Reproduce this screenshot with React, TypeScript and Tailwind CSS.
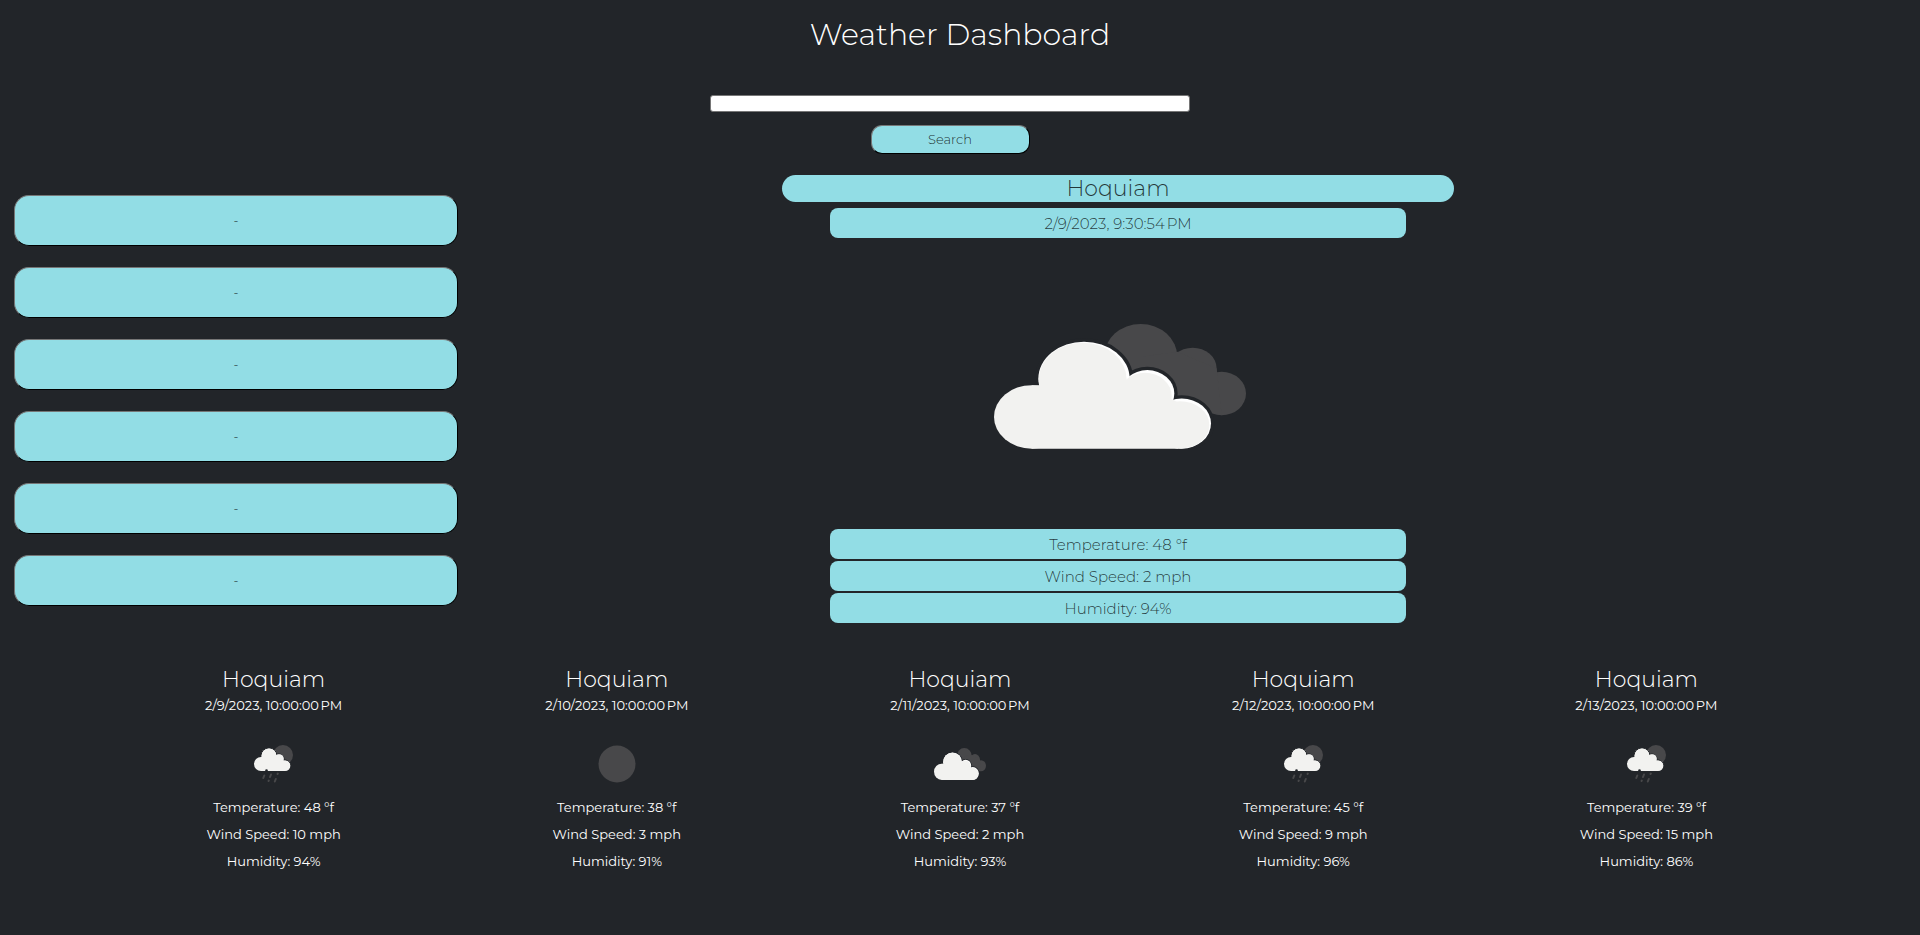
const BUTTON = 'bg-[#92dde5] border border-t-[#767676] border-l-[#767676] border-r-black border-b-black text-[13px] font-light text-black/80';
const BAR = 'h-[30px] rounded-lg bg-[#92dde5] leading-[31px]';

function CloudIcon({ className }: { className: string }) {
  return (
    <svg viewBox="72 72 756 374" preserveAspectRatio="none" className={className} aria-hidden="true">
      <g fill="#48484a">
        <ellipse cx="512" cy="170" rx="110" ry="98" />
        <ellipse cx="668" cy="205" rx="72" ry="62" />
        <ellipse cx="755" cy="280" rx="73" ry="65" />
        <path d="M512 170L622 155L740 205L755 345L600 300Z" />
      </g>
      <g fill="#222529" stroke="#222529" strokeWidth="20">
        <ellipse cx="342" cy="235" rx="137" ry="110" />
        <ellipse cx="532" cy="280" rx="81" ry="70" />
        <ellipse cx="635" cy="370" rx="88" ry="75" />
      </g>
      <g fill="#ffffff">
        <ellipse cx="342" cy="235" rx="137" ry="110" />
        <ellipse cx="532" cy="280" rx="81" ry="70" />
        <ellipse cx="635" cy="370" rx="88" ry="75" />
      </g>
      <g fill="#f2f2f0">
        <ellipse cx="185" cy="350" rx="113" ry="95" />
        <ellipse cx="338" cy="238" rx="132" ry="110" />
        <ellipse cx="525" cy="288" rx="80" ry="70" />
        <ellipse cx="630" cy="374" rx="88" ry="71" />
        <path d="M185 255H540L625 308V445H185Z" />
      </g>
    </svg>
  );
}

function RainIcon() {
  return (
    <svg viewBox="0 0 39 38" className="h-[38px] w-[39px]" aria-hidden="true">
      <circle cx="29" cy="10" r="10" fill="#48484a" />
      <g fill="#f2f2f0" stroke="#222529" strokeWidth="1">
        <circle cx="15" cy="11" r="8" />
        <circle cx="25" cy="14" r="5" />
        <circle cx="31" cy="20.500" r="5.500" />
      </g>
      <g fill="#f2f2f0">
        <circle cx="7" cy="19" r="7" />
        <circle cx="15" cy="11" r="7.500" />
        <circle cx="25" cy="14" r="4.800" />
        <circle cx="31" cy="20.700" r="5.300" />
        <path d="M7 12H22L31 16V26H7Z" />
      </g>
      <circle cx="12.500" cy="25.500" r="1.300" fill="#222529" />
      <g stroke="#48484a" strokeWidth="2" strokeLinecap="round">
        <path d="M10.300 30.500L9.300 33M17 29.500L16 32M14.800 35.500L14.500 36M23.800 28.500L23.500 29M21.800 34L20.800 36.500" />
      </g>
    </svg>
  );
}

function MoonIcon() {
  return (
    <svg viewBox="0 0 38 38" className="h-[38px] w-[38px]" aria-hidden="true">
      <circle cx="19" cy="19" r="18.500" fill="#48484a" />
    </svg>
  );
}

type Sky = 'rain' | 'moon' | 'cloud';

function SkyIcon({ sky }: { sky: Sky }) {
  if (sky === 'rain') return <RainIcon />;
  if (sky === 'moon') return <MoonIcon />;
  return <CloudIcon className="h-8 w-[52px]" />;
}

const forecast: { date: string; sky: Sky; temp: number; wind: number; humidity: number }[] = [
  { date: '2/9/2023', sky: 'rain', temp: 48, wind: 10, humidity: 94 },
  { date: '2/10/2023', sky: 'moon', temp: 38, wind: 3, humidity: 91 },
  { date: '2/11/2023', sky: 'cloud', temp: 37, wind: 2, humidity: 93 },
  { date: '2/12/2023', sky: 'rain', temp: 45, wind: 9, humidity: 96 },
  { date: '2/13/2023', sky: 'rain', temp: 39, wind: 15, humidity: 86 },
];

const history = ['-', '-', '-', '-', '-', '-'];

export default function App() {
  return (
    <div className="min-h-screen bg-[#222529] font-['Montserrat','Inter',sans-serif] text-white">
      <header className="pt-[15px] text-center">
        <h1 className="text-[30px] leading-10 font-light">Weather Dashboard</h1>
      </header>

      <form className="mt-10 mr-5 flex flex-col items-center" onSubmit={(e) => e.preventDefault()}>
        <input
          type="text"
          aria-label="City"
          className="h-[17px] w-[25vw] rounded-[3px] border border-[#767676] bg-white px-1 text-[13px] text-black"
        />
        <button type="submit" className={`${BUTTON} mt-[13px] h-[29px] w-[159px] rounded-[11px]`}>
          Search
        </button>
      </form>

      <div className="mt-[21px] flex">
        <aside className="w-[472px] shrink-0 px-[14px] pt-5">
          <ul className="flex flex-col gap-[21px]">
            {history.map((city, i) => (
              <li key={i}>
                <button type="button" className={`${BUTTON} h-[51px] w-full rounded-[15px]`}>
                  {city}
                </button>
              </li>
            ))}
          </ul>
        </aside>

        <main className="flex flex-1 flex-col items-center pr-[156px] text-center text-[15px] font-light text-black/75">
          <h2 className="h-[27px] w-[35vw] rounded-[14px] bg-[#92dde5] text-[22px] leading-[27px]">Hoquiam</h2>
          <p className={`${BAR} mt-[6px] w-[30vw]`}>2/9/2023, 9:30:54{'\u202f'}PM</p>
          <div className="flex h-[291px] items-center justify-center pt-[6px] pl-1">
            <CloudIcon className="h-[125px] w-[252px]" />
          </div>
          <div className="flex w-[30vw] flex-col gap-[2px]">
            <p className={BAR}>Temperature: 48 °f</p>
            <p className={BAR}>Wind Speed: 2 mph</p>
            <p className={BAR}>Humidity: 94%</p>
          </div>
        </main>
      </div>

      <section className="mt-[42px] grid grid-cols-5 px-[102px] text-center">
        {forecast.map((day) => (
          <article key={day.date} className="flex flex-col items-center text-[13px]">
            <h3 className="text-[22px] leading-[30px] font-light">Hoquiam</h3>
            <p className="leading-5">{day.date}, 10:00:00{'\u202f'}PM</p>
            <div className="mt-6 mb-[5px] flex h-[50px] items-center justify-center">
              <SkyIcon sky={day.sky} />
            </div>
            <p className="leading-[27px]">Temperature: {day.temp} °f</p>
            <p className="leading-[27px]">Wind Speed: {day.wind} mph</p>
            <p className="leading-[27px]">Humidity: {day.humidity}%</p>
          </article>
        ))}
      </section>
    </div>
  );
}
